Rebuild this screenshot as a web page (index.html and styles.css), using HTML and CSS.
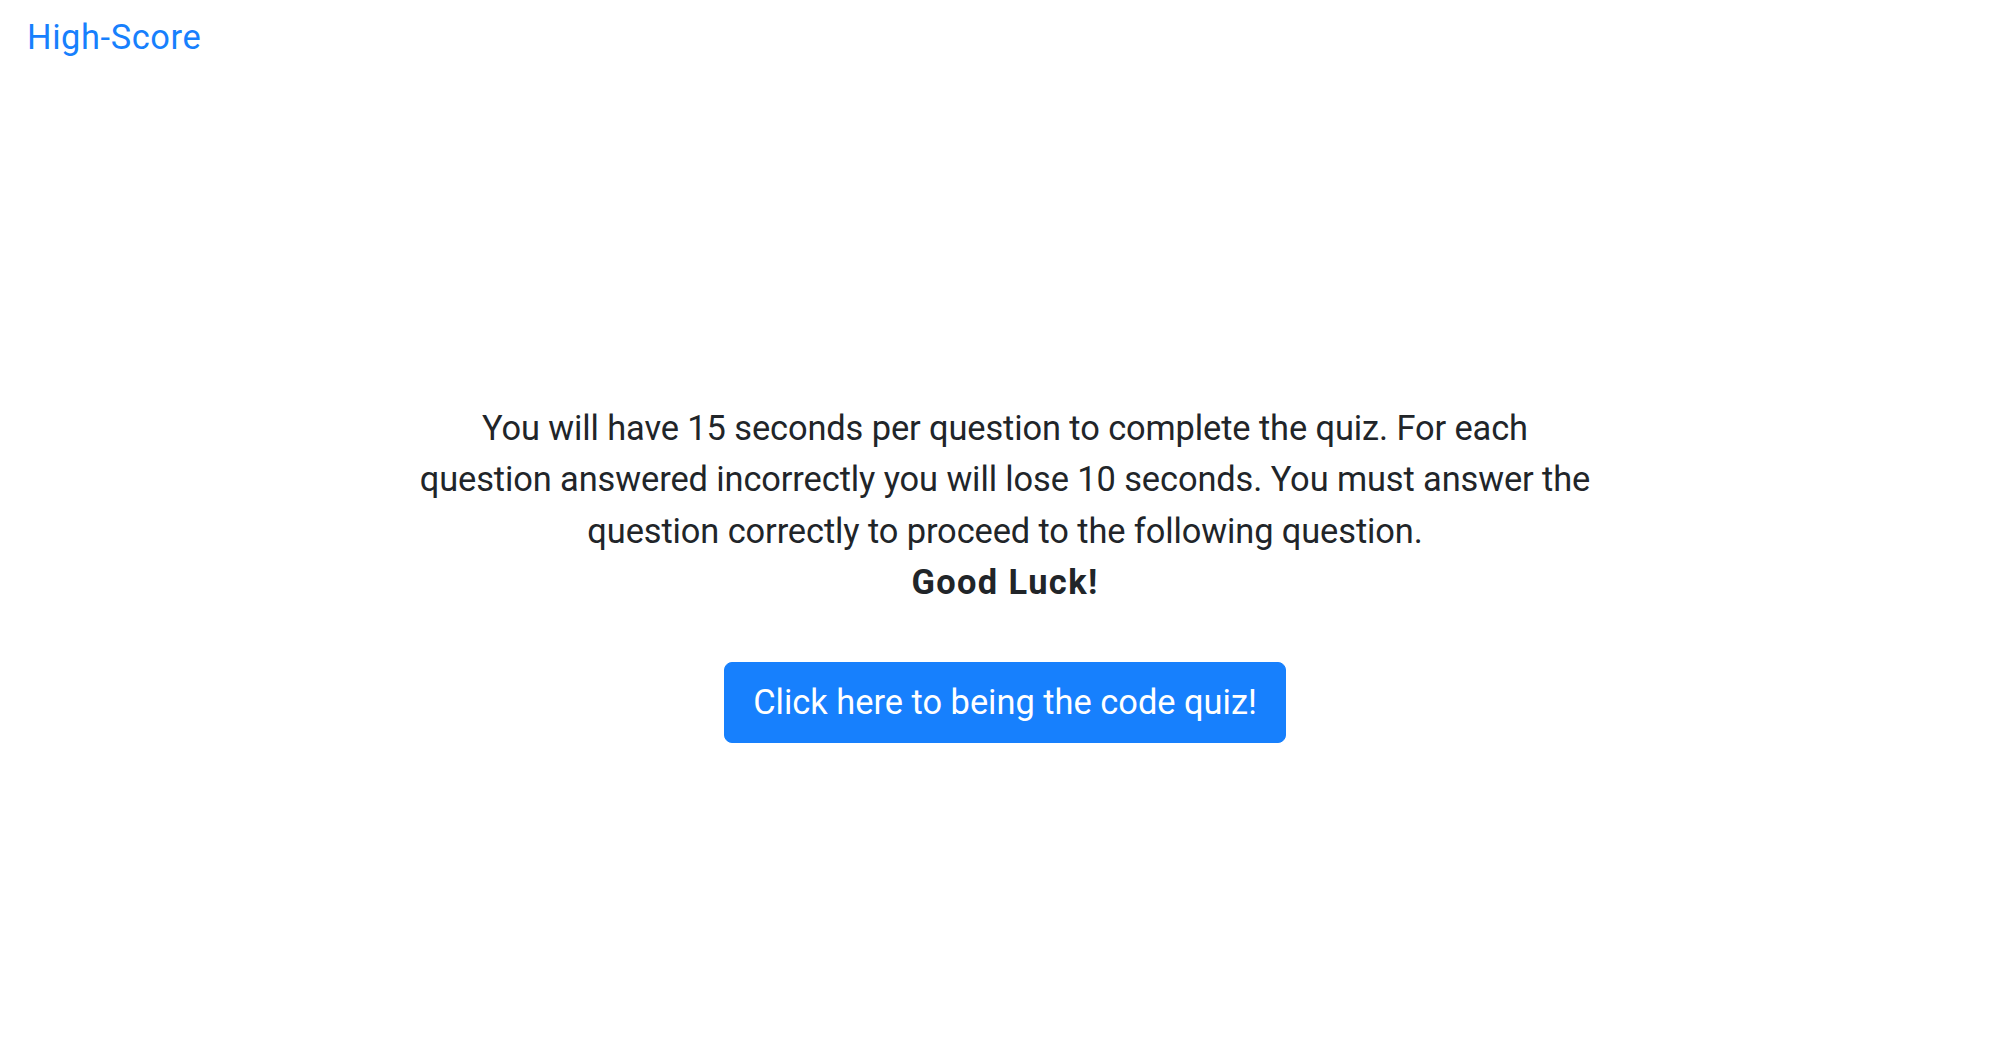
FILE: index.html
```html
<!DOCTYPE html>
<html lang="en">
<head>
<meta charset="utf-8">
<title>Code Quiz</title>
<link rel="stylesheet" href="styles.css">
</head>
<body>
<nav class="navbar">
  <a class="brand" href="#">High-Score</a>
</nav>
<main class="intro">
  <p class="lead">You will have 15 seconds per question to complete the quiz. For each<br>question answered incorrectly you will lose 10 seconds. You must answer the<br>question correctly to proceed to the following question.<br><strong>Good Luck!</strong></p>
  <button class="btn-start" type="button">Click here to being the code quiz!</button>
</main>
</body>
</html>
```

FILE: styles.css
```css
html, body {
  margin: 0;
  padding: 0;
  background: #fff;
}
body {
  font-family: Roboto, "Liberation Sans", sans-serif;
  color: #212529;
  font-size: 34.4px;
  line-height: 1.5;
}
.navbar {
  display: flex;
  padding: 12px 27px 8px;
}
.brand {
  color: #1780fd;
  text-decoration: none;
  font-size: 34.4px;
  line-height: 51.6px;
  letter-spacing: 0.6px;
}
.intro {
  display: flex;
  flex-direction: column;
  align-items: center;
  margin: 331px auto 0;
  padding-left: 12px;
  width: 1240px;
  text-align: center;
}
.lead {
  margin: 0 0 53px;
  font-size: 34.4px;
  line-height: 51.5px;
  letter-spacing: -0.1px;
}
.lead strong {
  font-weight: 700;
  letter-spacing: 1.4px;
}
.btn-start {
  font-family: inherit;
  font-size: 34.4px;
  line-height: 51.6px;
  color: #fff;
  background: #1780fd;
  border: 1px solid #1780fd;
  border-radius: 8px;
  padding: 14px 28px;
  cursor: pointer;
}
```
